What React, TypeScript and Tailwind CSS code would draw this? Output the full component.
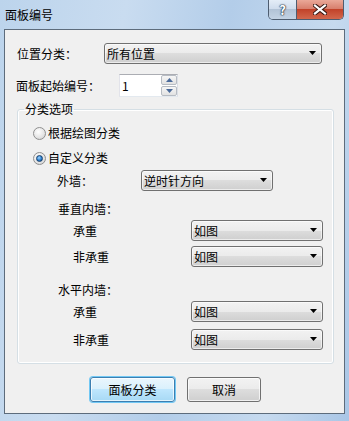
import React from 'react';

const font = "font-['SimSun','Noto_Sans_CJK_SC',sans-serif]";

const Combo: React.FC<{ value: string; className?: string }> = ({ value, className = '' }) => (
  <div
    className={`relative flex items-center h-[21px] rounded-[3px] border border-[#707070] bg-[linear-gradient(#f2f2f2,#ebebeb_50%,#dddddd_50%,#cfcfcf)] shadow-[inset_0_0_0_1px_rgba(255,255,255,0.6)] ${className}`}
  >
    <span className="pl-[2px] text-[12px] leading-none text-black">{value}</span>
    <svg className="absolute right-[4px] top-[7px]" width="8" height="5" viewBox="0 0 8 5">
      <path d="M0 0H7L3.5 4Z" fill="#000" />
    </svg>
  </div>
);

const Radio: React.FC<{ checked?: boolean; label: string }> = ({ checked, label }) => (
  <div className="flex items-center h-[20px]">
    <span className="flex items-center justify-center w-[13px] h-[13px] rounded-full border border-[#8f8f8f] bg-[radial-gradient(circle_at_40%_35%,#ffffff,#e6e6e6_55%,#c9c9c9)]">
      {checked && (
        <span className="w-[7px] h-[7px] rounded-full border border-[#173f6b] bg-[radial-gradient(circle_at_40%_35%,#9fd5ff,#2c7fcf_55%,#0c4a8c)]" />
      )}
    </span>
    <span className="ml-[2px] text-[12px] leading-none text-black">{label}</span>
  </div>
);

const Btn: React.FC<{ label: string; primary?: boolean; className?: string }> = ({ label, primary, className = '' }) => (
  <button
    className={`flex items-center justify-center h-[25px] rounded-[3px] text-[12px] leading-none text-black ${
      primary
        ? 'border border-[#3c7fb1] bg-[linear-gradient(#eaf6fd,#d9f0fc_50%,#bee6fd_50%,#a7d9f5)] shadow-[0_0_0_1px_#72c8f4,inset_0_0_0_1px_rgba(255,255,255,0.7)]'
        : 'border border-[#707070] bg-[linear-gradient(#f2f2f2,#ebebeb_50%,#dddddd_50%,#cfcfcf)] shadow-[inset_0_0_0_1px_rgba(255,255,255,0.7)]'
    } ${className}`}
  >
    {label}
  </button>
);

export default function App() {
  return (
    <div
      className={`w-[349px] h-[421px] overflow-hidden flex flex-col bg-[linear-gradient(100deg,#bcd4ec,#c9dcf0_30%,#b3cde9_55%,#c6daef_80%,#a9c6e6)] ${font}`}
    >
      {/* title bar */}
      <div className="h-[29px] flex items-start">
        <span className="pl-[5px] pt-[8px] text-[12px] leading-[14px] text-black">面板编号</span>
        <div className="flex-1" />
        <div className="flex mr-[5px] h-[20px] rounded-b-[5px] border border-t-0 border-[#4e5d70] overflow-hidden">
          <div className="w-[28px] flex items-center justify-center bg-[linear-gradient(#e4edf7,#d0dded_45%,#b2c3d6_50%,#c3d3e4)] border-r border-[#4e5d70]">
            <span className="text-[13px] font-bold leading-none text-white [text-shadow:0_0_1px_#1c2a3a,0_0_1px_#1c2a3a,0_0_2px_#1c2a3a]">?</span>
          </div>
          <div className="w-[46px] flex items-center justify-center bg-[linear-gradient(#eaa898,#d8806e_45%,#c2432a_50%,#d2674c)]">
            <svg width="14" height="11" viewBox="0 0 14 11">
              <path d="M2 1.5L12 9.5M12 1.5L2 9.5" stroke="#3a1a14" strokeWidth="4.2" strokeLinecap="square" />
              <path d="M2 1.5L12 9.5M12 1.5L2 9.5" stroke="#ffffff" strokeWidth="2.2" strokeLinecap="square" />
            </svg>
          </div>
        </div>
      </div>

      {/* client area */}
      <div className="ml-[4px] w-[341px] h-[385px] border border-[#5d6c7c] bg-[#f0f0f0] flex flex-col text-[12px] text-black">
        <div className="mt-[13px] flex items-center h-[21px]">
          <span className="pl-[12px] w-[99px] leading-none">位置分类：</span>
          <Combo value="所有位置" className="w-[218px]" />
        </div>

        <div className="mt-[10px] flex items-center h-[23px]">
          <span className="pl-[11px] w-[114px] leading-none">面板起始编号：</span>
          <div className="flex h-[23px] w-[59px] bg-white border border-[#abadb3] border-l-[#e2e3ea] border-r-[#dbdfe6] border-b-[#e3e9ef]">
            <span className="flex-1 flex items-center pl-[2px] leading-none">1</span>
            <div className="w-[16px] flex flex-col gap-[1px] py-[0px]">
              <div className="flex-1 flex items-center justify-center rounded-[2px] border border-[#b7bcc3] bg-[linear-gradient(#f6f6f6,#e2e2e2)]">
                <svg width="7" height="4" viewBox="0 0 7 4">
                  <path d="M0 4H7L3.5 0Z" fill="#4a6a9a" />
                </svg>
              </div>
              <div className="flex-1 flex items-center justify-center rounded-[2px] border border-[#b7bcc3] bg-[linear-gradient(#f6f6f6,#e2e2e2)]">
                <svg width="7" height="4" viewBox="0 0 7 4">
                  <path d="M0 0H7L3.5 4Z" fill="#4a6a9a" />
                </svg>
              </div>
            </div>
          </div>
        </div>

        <fieldset className="mt-[4px] ml-[12px] w-[317px] h-[263px] rounded-[3px] border border-[#d5dfe5] shadow-[inset_0_0_0_1px_#ffffff] p-0 m-0 flex flex-col">
          <legend className="ml-[6px] px-[1px] text-[12px] leading-[16px]">分类选项</legend>

          <div className="mt-[6px] pl-[15px]">
            <Radio label="根据绘图分类" />
          </div>
          <div className="mt-[5px] pl-[15px]">
            <Radio checked label="自定义分类" />
          </div>

          <div className="mt-[2px] flex items-center h-[21px] pl-[39px]">
            <span className="w-[84px] leading-none">外墙：</span>
            <Combo value="逆时针方向" className="w-[132px]" />
          </div>

          <div className="mt-[10px] h-[16px] flex items-center pl-[40px] leading-none">垂直内墙：</div>
          <div className="mt-[3px] flex items-center h-[21px] pl-[55px]">
            <span className="w-[118px] leading-none">承重</span>
            <Combo value="如图" className="w-[132px]" />
          </div>
          <div className="mt-[5px] flex items-center h-[21px] pl-[55px]">
            <span className="w-[118px] leading-none">非承重</span>
            <Combo value="如图" className="w-[132px]" />
          </div>

          <div className="mt-[15px] h-[16px] flex items-center pl-[40px] leading-none">水平内墙：</div>
          <div className="mt-[3px] flex items-center h-[21px] pl-[55px]">
            <span className="w-[118px] leading-none">承重</span>
            <Combo value="如图" className="w-[132px]" />
          </div>
          <div className="mt-[7px] flex items-center h-[21px] pl-[55px]">
            <span className="w-[118px] leading-none">非承重</span>
            <Combo value="如图" className="w-[132px]" />
          </div>
        </fieldset>

        <div className="mt-[13px] flex pl-[85px] gap-[12px]">
          <Btn primary label="面板分类" className="w-[85px]" />
          <Btn label="取消" className="w-[74px]" />
        </div>
      </div>
    </div>
  );
}
